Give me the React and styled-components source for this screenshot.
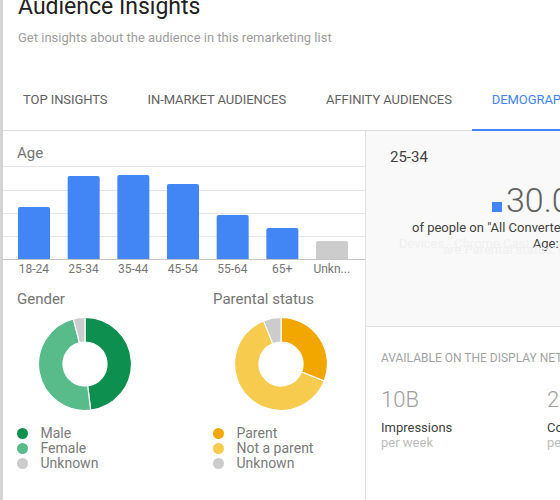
import React from "react";
import styled, { createGlobalStyle } from "styled-components";

const GlobalStyle = createGlobalStyle`
  html, body {
    margin: 0;
    padding: 0;
    background: #ffffff;
    overflow: hidden;
  }
  body {
    font-family: Roboto, "Liberation Sans", Arial, sans-serif;
  }
`;

const Page = styled.div`
  display: flex;
  width: 820px;
  height: 500px;
  overflow: hidden;
`;

const SideEdge = styled.div`
  width: 3px;
  flex: none;
  background: #d4d4d4;
`;

const Main = styled.div`
  flex: 1;
  display: flex;
  flex-direction: column;
`;

const Header = styled.div`
  padding: 0 15px;
`;

const Title = styled.h1`
  margin: -7px 0 0;
  font-size: 23px;
  line-height: 28px;
  font-weight: 400;
  color: #212121;
`;

const Subtitle = styled.p`
  margin: 9px 0 0;
  font-size: 13px;
  line-height: 16px;
  color: #9e9e9e;
`;

const TabBar = styled.div`
  display: flex;
  margin-top: 23px;
  border-bottom: 1px solid #dcdcdc;
`;

const Tab = styled.div`
  height: 60px;
  padding: 0 20px;
  margin-bottom: -1px;
  display: flex;
  align-items: center;
  font-size: 13px;
  letter-spacing: -0.07px;
  text-transform: uppercase;
  white-space: nowrap;
  color: ${(p) => (p.$active ? "#4285f4" : "#616161")};
  border-bottom: 2px solid ${(p) => (p.$active ? "#4285f4" : "transparent")};
`;

const Content = styled.div`
  flex: 1;
  display: grid;
  grid-template-columns: 363px 1fr;
`;

const LeftCard = styled.div`
  background: #ffffff;
  border-right: 1px solid #e0e0e0;
  padding-top: 13px;
`;

const SectionTitle = styled.div`
  font-size: 15px;
  line-height: 18px;
  color: #757575;
  padding-left: ${(p) => p.$indent ?? 0}px;
`;

const ChartSvg = styled.svg`
  display: block;
`;

const AxisLabels = styled.div`
  display: grid;
  grid-template-columns: repeat(7, 49.67px);
  padding-left: 6px;
  margin-top: 2px;
`;

const AxisLabel = styled.span`
  font-size: 12px;
  line-height: 14px;
  color: #757575;
  text-align: center;
`;

const PieRow = styled.div`
  display: grid;
  grid-template-columns: 196px 196px;
  padding-left: 14px;
  margin-top: 14px;
`;

const PieBlock = styled.div`
  display: flex;
  flex-direction: column;
`;

const DonutSvg = styled.svg`
  display: block;
  margin: 9px 0 0 21px;
`;

const Legend = styled.ul`
  list-style: none;
  margin: 15px 0 0;
  padding: 0;
`;

const LegendItem = styled.li`
  display: flex;
  align-items: center;
  font-size: 14px;
  line-height: 15px;
  color: #7a7a7a;
`;

const Dot = styled.span`
  width: 11px;
  height: 11px;
  border-radius: 50%;
  background: ${(p) => p.$color};
  margin-right: 12.5px;
  flex: none;
`;

const RightPanel = styled.div`
  display: flex;
  flex-direction: column;
`;

const Highlight = styled.div`
  height: 196px;
  box-sizing: border-box;
  background: #f9f9f9;
  border-bottom: 1px solid #e0e0e0;
  padding: 17px 0 0 24px;
`;

const HighlightLabel = styled.div`
  font-size: 15px;
  line-height: 18px;
  color: #424242;
`;

const BigNumber = styled.div`
  margin: 14px 0 0 102px;
  display: flex;
  align-items: baseline;
  font-size: 34px;
  line-height: 40px;
  font-weight: 300;
  color: #616161;
  white-space: nowrap;
`;

const Swatch = styled.span`
  width: 10px;
  height: 10px;
  background: #4285f4;
  margin-right: 4px;
  align-self: flex-end;
  margin-bottom: 8px;
`;

const StatLine = styled.div`
  margin-left: ${(p) => p.$indent}px;
  margin-top: ${(p) => p.$shift ?? 0}px;
  font-size: 13px;
  line-height: 16px;
  white-space: nowrap;
  color: #424242;
`;

const Faint = styled.span`
  color: #f0f0f0;
`;

const Reach = styled.div`
  padding: 24px 0 0 15px;
`;

const ReachTitle = styled.div`
  font-size: 12px;
  line-height: 14px;
  text-transform: uppercase;
  color: #a3a3a3;
  white-space: nowrap;
`;

const ReachStats = styled.div`
  display: grid;
  grid-template-columns: 166px 166px;
  margin-top: 22px;
`;

const Stat = styled.div`
  display: flex;
  flex-direction: column;
`;

const StatValue = styled.div`
  font-size: 22px;
  line-height: 26px;
  font-weight: 300;
  color: #9e9e9e;
`;

const StatName = styled.div`
  margin-top: 7px;
  font-size: 13px;
  line-height: 15px;
  color: #424242;
`;

const StatUnit = styled.div`
  font-size: 13px;
  line-height: 15px;
  color: #bdbdbd;
`;

const ageData = [
  { label: "18-24", h: 52 },
  { label: "25-34", h: 83 },
  { label: "35-44", h: 84 },
  { label: "45-54", h: 75 },
  { label: "55-64", h: 44 },
  { label: "65+", h: 31 },
  { label: "Unkn...", h: 18, muted: true },
];

const gender = [
  { label: "Male", color: "#0d904f", from: 0, to: 173 },
  { label: "Female", color: "#57bb8a", from: 173, to: 345.5 },
  { label: "Unknown", color: "#cccccc", from: 345.5, to: 360 },
];

const parental = [
  { label: "Parent", color: "#f2a600", from: 0, to: 111.5 },
  { label: "Not a parent", color: "#f7cb4d", from: 111.5, to: 338 },
  { label: "Unknown", color: "#cccccc", from: 338, to: 360 },
];

const arcPath = (cx, cy, R, r, a0, a1) => {
  const rad = (a) => ((a - 90) * Math.PI) / 180;
  const pt = (rr, a) => [cx + rr * Math.cos(rad(a)), cy + rr * Math.sin(rad(a))];
  const large = a1 - a0 > 180 ? 1 : 0;
  const [x0, y0] = pt(R, a0);
  const [x1, y1] = pt(R, a1);
  const [x2, y2] = pt(r, a1);
  const [x3, y3] = pt(r, a0);
  return `M${x0} ${y0} A${R} ${R} 0 ${large} 1 ${x1} ${y1} L${x2} ${y2} A${r} ${r} 0 ${large} 0 ${x3} ${y3} Z`;
};

const AgeChart = () => (
  <ChartSvg width="362" height="98" viewBox="0 0 362 98">
    {[4.5, 28.5, 51.5, 74.5].map((y) => (
      <line key={y} x1="0" x2="362" y1={y} y2={y} stroke="#e6e6e6" strokeWidth="1" />
    ))}
    {ageData.map((d, i) => {
      const cx = 31 + i * 49.67;
      return (
        <rect
          key={d.label}
          x={cx - 16}
          y={97 - d.h}
          width="32"
          height={d.h + 3}
          rx="2"
          fill={d.muted ? "#cccccc" : "#4285f4"}
        />
      );
    })}
    <line x1="0" x2="362" y1="97.5" y2="97.5" stroke="#c6c6c6" strokeWidth="1" />
  </ChartSvg>
);

const Donut = ({ slices }) => (
  <DonutSvg width="94" height="94" viewBox="0 0 94 94">
    {slices.map((s) => (
      <path
        key={s.label}
        d={arcPath(47, 47, 46.5, 22, s.from, s.to)}
        fill={s.color}
        stroke="#ffffff"
        strokeWidth="1.2"
      />
    ))}
  </DonutSvg>
);

const PieCard = ({ title, slices }) => (
  <PieBlock>
    <SectionTitle>{title}</SectionTitle>
    <Donut slices={slices} />
    <Legend>
      {slices.map((s) => (
        <LegendItem key={s.label}>
          <Dot $color={s.color} />
          {s.label}
        </LegendItem>
      ))}
    </Legend>
  </PieBlock>
);

const App = () => {
  const tabs = ["Top insights", "In-market audiences", "Affinity audiences", "Demographics"];

  return (
    <>
      <GlobalStyle />
      <Page>
        <SideEdge />
        <Main>
          <Header>
            <Title>Audience Insights</Title>
            <Subtitle>Get insights about the audience in this remarketing list</Subtitle>
          </Header>
          <TabBar>
            {tabs.map((t, i) => (
              <Tab key={t} $active={i === 3}>
                {t}
              </Tab>
            ))}
          </TabBar>
          <Content>
            <LeftCard>
              <SectionTitle $indent={14}>Age</SectionTitle>
              <AgeChart />
              <AxisLabels>
                {ageData.map((d) => (
                  <AxisLabel key={d.label}>{d.label}</AxisLabel>
                ))}
              </AxisLabels>
              <PieRow>
                <PieCard title="Gender" slices={gender} />
                <PieCard title="Parental status" slices={parental} />
              </PieRow>
            </LeftCard>
            <RightPanel>
              <Highlight>
                <HighlightLabel>25-34</HighlightLabel>
                <BigNumber>
                  <Swatch />
                  30.03%
                </BigNumber>
                <StatLine $indent={22}>of people on "All Converters" list are</StatLine>
                <StatLine $indent={9}>
                  <Faint>Devices - Chrome Cast</Faint> Age: 25-34
                </StatLine>
                <StatLine $indent={53} $shift={-10}>
                  <Faint>are Parental status: Not a parent</Faint>
                </StatLine>
              </Highlight>
              <Reach>
                <ReachTitle>Available on the Display Network</ReachTitle>
                <ReachStats>
                  <Stat>
                    <StatValue>10B</StatValue>
                    <StatName>Impressions</StatName>
                    <StatUnit>per week</StatUnit>
                  </Stat>
                  <Stat>
                    <StatValue>20M</StatValue>
                    <StatName>Cookies</StatName>
                    <StatUnit>per week</StatUnit>
                  </Stat>
                </ReachStats>
              </Reach>
            </RightPanel>
          </Content>
        </Main>
      </Page>
    </>
  );
};

export default App;
